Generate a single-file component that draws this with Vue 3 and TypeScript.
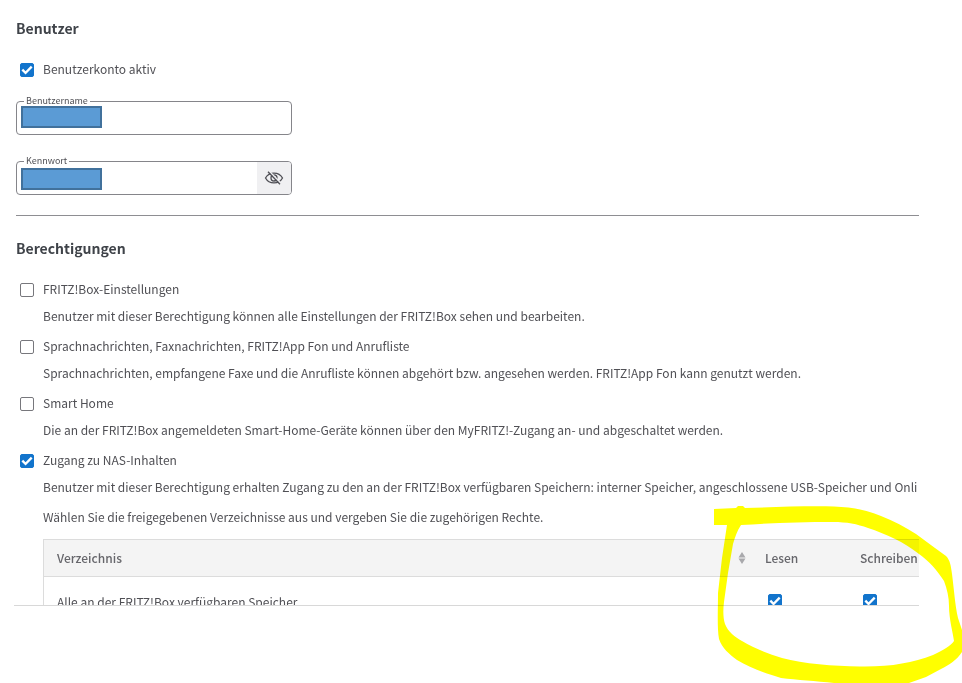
<script setup lang="ts">
import { ref } from 'vue'

interface Permission {
  id: string
  label: string
  description: string
  granted: boolean
}

const accountActive = ref(true)
const userName = ref('')
const password = ref('')
const showPassword = ref(false)

const permissions = ref<Permission[]>([
  {
    id: 'settings',
    label: 'FRITZ!Box-Einstellungen',
    description: 'Benutzer mit dieser Berechtigung können alle Einstellungen der FRITZ!Box sehen und bearbeiten.',
    granted: false,
  },
  {
    id: 'phone',
    label: 'Sprachnachrichten, Faxnachrichten, FRITZ!App Fon und Anrufliste',
    description:
      'Sprachnachrichten, empfangene Faxe und die Anrufliste können abgehört bzw. angesehen werden. FRITZ!App Fon kann genutzt werden.',
    granted: false,
  },
  {
    id: 'smarthome',
    label: 'Smart Home',
    description:
      'Die an der FRITZ!Box angemeldeten Smart-Home-Geräte können über den MyFRITZ!-Zugang an- und abgeschaltet werden.',
    granted: false,
  },
  {
    id: 'nas',
    label: 'Zugang zu NAS-Inhalten',
    description:
      'Benutzer mit dieser Berechtigung erhalten Zugang zu den an der FRITZ!Box verfügbaren Speichern: interner Speicher, angeschlossene USB-Speicher und Onli',
    granted: true,
  },
])

const directories = ref([{ name: 'Alle an der FRITZ!Box verfügbaren Speicher', read: true, write: true }])
</script>

<template>
  <div class="page">
    <main class="panel">
      <section class="user">
        <h2>Benutzer</h2>
        <label class="option">
          <input v-model="accountActive" class="check" type="checkbox" />
          <span>Benutzerkonto aktiv</span>
        </label>
        <div class="fields">
          <div class="field">
            <label for="username">Benutzername</label>
            <input id="username" v-model="userName" type="text" />
            <span class="redaction"></span>
          </div>
          <div class="field">
            <label for="password">Kennwort</label>
            <input id="password" v-model="password" :type="showPassword ? 'text' : 'password'" />
            <button type="button" :aria-pressed="showPassword" @click="showPassword = !showPassword">
              <svg viewBox="0 0 20 16" width="20" height="16" fill="none" stroke="#4f4f55" stroke-width="1.3">
                <path d="M1.500 8C3.300 4.700 6.400 3.100 10 3.100S16.700 4.700 18.500 8C16.700 11.300 13.600 12.900 10 12.900S3.300 11.300 1.500 8Z" />
                <circle cx="10" cy="8" r="3" />
                <path d="M5.200 1.200 17 13.400" stroke="#f0f0f2" stroke-width="1.600" />
                <path d="M4 1.800 16 14.200" />
              </svg>
            </button>
            <span class="redaction low"></span>
          </div>
        </div>
      </section>

      <hr />

      <section>
        <h2>Berechtigungen</h2>
        <div class="permissions">
          <div v-for="item in permissions" :key="item.id" class="permission">
            <label class="option">
              <input v-model="item.granted" class="check" type="checkbox" />
              <span>{{ item.label }}</span>
            </label>
            <p>{{ item.description }}</p>
          </div>
        </div>
        <div class="directories">
          <p>Wählen Sie die freigegebenen Verzeichnisse aus und vergeben Sie die zugehörigen Rechte.</p>
          <table>
            <thead>
              <tr>
                <th scope="col">
                  <div class="sortable">
                    <span>Verzeichnis</span>
                    <svg viewBox="0 0 8 12" width="8" height="12" fill="#a9a9ac">
                      <path d="M4 0 7.500 5.400H.5ZM4 12 .5 6.600H7.500Z" />
                    </svg>
                  </div>
                </th>
                <th scope="col" class="right">Lesen</th>
                <th scope="col" class="right">Schreiben</th>
              </tr>
            </thead>
            <tbody>
              <tr v-for="dir in directories" :key="dir.name">
                <td>{{ dir.name }}</td>
                <td class="tick"><input v-model="dir.read" class="check" type="checkbox" aria-label="Lesen" /></td>
                <td class="tick"><input v-model="dir.write" class="check" type="checkbox" aria-label="Schreiben" /></td>
              </tr>
            </tbody>
          </table>
        </div>
      </section>
    </main>

    <svg class="marker" viewBox="0 0 262 193" width="262" height="193" fill="#ffff00" fill-rule="evenodd">
      <path
        d="M14 19 36 18 38 16H43L45 18C75 17 105 16 134 16.500C151 17 166 20 181 26C194 31 205 37 216 44L235 58L246 66C250 70 251 76 252 84C254 99 255 115 258 128L262 140V162C257 170 249 175 241 179L226 187L209 193H134C116 191 97 190 81 188C67 184 50 178 37 170C29 164 22 158 19 149C17 138 18 120 18 103L22 68L27 35H14ZM41 35C37 41 35 47 33 54L28 83L24 112C23 120 23 128 25 134C28 142 35 147 42 151C54 158 68 164 82 168C104 174 133 176 160 176.500C190 177 212 173 233 165C243 160 251 156 254 151C253 143 249 129 249 116C249 107 247 99 244 91C237 80 229 71 219 64C204 52 186 44 168 38C157 34 147 32 133 32C101 32 70 33 41 35Z"
      />
    </svg>
  </div>
</template>

<style>
body {
  margin: 0;
  background: #fff;
}
</style>

<style scoped>
.page {
  position: relative;
  box-sizing: border-box;
  height: 100vh;
  padding: 0 43px 77px 14px;
  overflow: hidden;
  color: #505055;
  font-family: 'Noto Sans CJK SC', 'Noto Sans', sans-serif;
  font-size: 12px;
  line-height: 20px;
}

.panel {
  box-sizing: border-box;
  height: 100%;
  padding: 18px 0 0 2px;
  overflow: hidden;
  border-bottom: 1px solid #d8d8d8;
}

h2 {
  margin: 0 0 21px;
  color: #3f4349;
  font-size: 14px;
  font-weight: 700;
  line-height: 20px;
}

p {
  margin: 0;
  white-space: nowrap;
}

.option {
  display: flex;
  align-items: center;
  gap: 9px;
  padding-left: 4px;
}

.check {
  position: relative;
  display: block;
  flex: none;
  box-sizing: border-box;
  width: 14px;
  height: 14px;
  margin: 2px 0 0;
  appearance: none;
  background: #fff;
  border: 1px solid #77777c;
  border-radius: 2px;
}

.check:checked {
  background: #1274cc;
  border-color: #1274cc;
}

.check:checked::after {
  position: absolute;
  inset: 0;
  background: #fff;
  clip-path: polygon(4% 54%, 18% 40%, 38% 60%, 82% 15%, 96% 29%, 38% 88%);
  content: '';
}

.fields {
  display: flex;
  flex-direction: column;
  gap: 26px;
  width: 276px;
  margin-top: 22px;
}

.field {
  position: relative;
  display: flex;
  box-sizing: border-box;
  height: 34px;
  border: 1px solid #85858a;
  border-radius: 4px;
}

.field label {
  position: absolute;
  top: -7px;
  left: 7px;
  padding: 0 2px;
  background: #fff;
  font-size: 9px;
  line-height: 12px;
}

.field input {
  flex: 1;
  min-width: 0;
  padding: 0 8px;
  background: transparent;
  border: 0;
  outline: 0;
  font: inherit;
}

.field button {
  display: flex;
  align-items: center;
  justify-content: center;
  width: 34px;
  padding: 0;
  background: #f0f0f2;
  border: 0;
  border-radius: 0 3px 3px 0;
}

.redaction {
  position: absolute;
  top: 4px;
  left: 4px;
  box-sizing: border-box;
  width: 81px;
  height: 22px;
  background: #5b9bd5;
  border: 2px solid #41719c;
}

.redaction.low {
  top: 6px;
}

hr {
  height: 1px;
  margin: 20px 0 22px;
  background: #8e8e92;
  border: 0;
}

.permissions {
  display: flex;
  flex-direction: column;
  gap: 10px;
}

.permission {
  display: flex;
  flex-direction: column;
  gap: 7px;
}

.permission p,
.directories {
  margin-left: 27px;
}

.directories {
  margin-top: 10px;
}

table {
  width: calc(100% + 24px);
  margin-top: 12px;
  border: 1px solid #dcdcdc;
  border-spacing: 0;
  table-layout: fixed;
}

th,
td {
  padding: 8px 13px;
  text-align: left;
  vertical-align: top;
}

th {
  background: #f4f4f4;
  border-bottom: 1px solid #dcdcdc;
  color: #66666b;
  font-weight: 500;
}

td {
  padding-top: 15px;
  padding-bottom: 15px;
}

.right {
  width: 69px;
}

th:first-child {
  padding-right: 6px;
}

.sortable {
  display: flex;
  align-items: center;
  justify-content: space-between;
}

.tick {
  padding-left: 16px;
}

.marker {
  position: absolute;
  right: 0;
  bottom: 0;
  mix-blend-mode: multiply;
  pointer-events: none;
}
</style>
